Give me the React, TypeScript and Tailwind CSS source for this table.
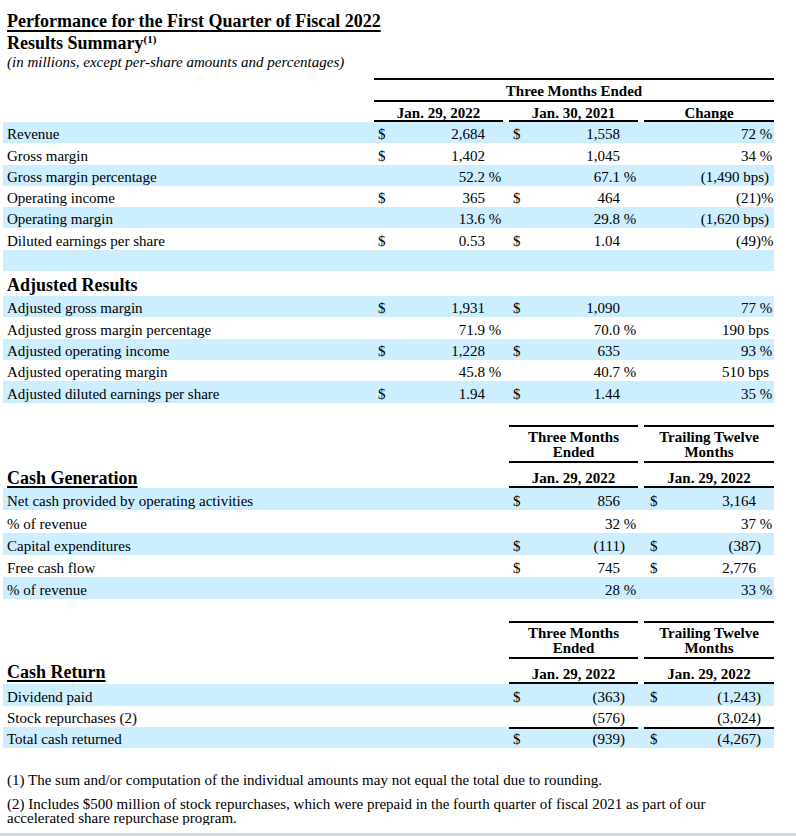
import React from "react";

type C = { d?: boolean; v: string; s?: string; bps?: boolean } | null;

function Val({ c, wide }: { c: C; wide?: boolean }) {
  if (!c) return null;
  if (c.bps)
    return <div className="w-full text-right pr-[5px] whitespace-nowrap">{c.v}</div>;
  return (
    <div className={`flex w-full items-end ${wide ? "pl-[6px]" : "pl-[4px]"}`}>
      <span className="w-[10px]">{c.d ? "$" : ""}</span>
      <span className="flex-1 text-right whitespace-nowrap">{c.v}</span>
      <span className="w-[18px] whitespace-nowrap">{c.s ?? ""}</span>
    </div>
  );
}

function Row({
  label,
  c1,
  c2,
  c3,
  striped,
}: {
  label?: string;
  c1?: C;
  c2?: C;
  c3?: C;
  striped?: boolean;
}) {
  return (
    <div className={`flex w-[771px] h-[21.3px] ${striped ? "bg-[#cceeff]" : ""} leading-[16px]`}>
      <div className="w-[371px] h-full flex items-end pl-[4px] pb-[1px] whitespace-nowrap">{label}</div>
      <div className="w-[129px] h-full flex items-end pb-[1px]">
        <Val c={c1 ?? null} />
      </div>
      <div className="w-[6px]" />
      <div className="w-[129px] h-full flex items-end pb-[1px]">
        <Val c={c2 ?? null} />
      </div>
      <div className="w-[6px]" />
      <div className="w-[130px] h-full flex items-end pb-[1px]">
        <Val c={c3 ?? null} />
      </div>
    </div>
  );
}

function CashRow(props: {
  label: string;
  c2: C;
  c3: C;
  striped?: boolean;
  tall?: boolean;
  lineAbove?: boolean;
}) {
  const { label, c2, c3, striped, tall, lineAbove } = props;
  return (
    <div
      className={`flex w-[771px] ${tall ? "h-[22.3px]" : "h-[21.3px]"} ${
        striped ? "bg-[#cceeff]" : ""
      } leading-[16px]`}
    >
      <div className="w-[371px] h-full flex items-end pl-[4px] pb-[1px] whitespace-nowrap">{label}</div>
      <div className="w-[129px]" />
      <div className="w-[6px]" />
      <div
        className={`w-[129px] h-full flex items-end pb-[1px] ${lineAbove ? "border-t-2 border-black" : ""}`}
      >
        <Val c={c2} />
      </div>
      <div className="w-[6px]" />
      <div
        className={`w-[130px] h-full flex items-end pb-[1px] ${lineAbove ? "border-t-2 border-black" : ""}`}
      >
        <Val c={c3} wide />
      </div>
    </div>
  );
}

function HeaderCol({ a, b, w }: { a: string; b: string; w: string }) {
  return (
    <div className={`${w} flex flex-col font-bold`}>
      <div className="h-[38px] border-t-2 border-b-2 border-black flex flex-col items-center justify-end pb-[1px] leading-[15px]">
        <span>{a}</span>
        <span>{b}</span>
      </div>
      <div className="h-[25px] border-b-2 border-black flex items-end justify-center pb-[1px] leading-[14px]">
        Jan. 29, 2022
      </div>
    </div>
  );
}

function CashHeader({ title, ret }: { title: string; ret?: boolean }) {
  return (
    <div className="flex w-[771px]">
      <div className={`w-[371px] pl-[4px] flex items-end ${ret ? "pb-[2px]" : "pb-0"}`}>
        <span className="font-bold text-[18px] leading-[20px] underline decoration-2 underline-offset-2">
          {title}
        </span>
      </div>
      <div className="w-[129px]" />
      <div className="w-[6px]" />
      <HeaderCol a="Three Months" b="Ended" w="w-[129px]" />
      <div className="w-[6px]" />
      <HeaderCol a="Trailing Twelve" b="Months" w="w-[130px]" />
    </div>
  );
}

export default function App() {
  return (
    <div className="w-[796px] h-[836px] overflow-hidden bg-white flex flex-col font-['Liberation_Serif','Times_New_Roman',serif] text-[15px] text-black">
      <div className="h-[833px] overflow-hidden">
        <div className="pl-[7px] pt-[11px]">
          <div className="h-[20px] text-[18px] leading-[20px] font-bold underline decoration-2 underline-offset-[3px] whitespace-nowrap">
            Performance for the First Quarter of Fiscal 2022
          </div>
          <div className="mt-[2px] h-[20px] text-[18px] leading-[20px] font-bold whitespace-nowrap">
            Results Summary
            <span className="relative top-[-6px] text-[11px] leading-[11px]">(1)</span>
          </div>
          <div className="h-[18px] leading-[18px] italic whitespace-nowrap">
            (in millions, except per-share amounts and percentages)
          </div>
        </div>
        <div className="h-[7px]" />
        <div className="ml-[3px]">
          {/* Table 1 header */}
          <div className="flex w-[771px]">
            <div className="w-[371px]" />
            <div className="w-[400px] flex flex-col font-bold">
              <div className="h-[2px] bg-black" />
              <div className="h-[20px] flex items-end justify-center pb-[1px] leading-[16px]">
                Three Months Ended
              </div>
              <div className="h-[2px] bg-black" />
              <div className="flex">
                <div className="w-[129px] h-[20px] border-b-2 border-black flex items-end justify-center leading-[14px]">
                  Jan. 29, 2022
                </div>
                <div className="w-[6px]" />
                <div className="w-[129px] h-[20px] border-b-2 border-black flex items-end justify-center leading-[14px]">
                  Jan. 30, 2021
                </div>
                <div className="w-[6px]" />
                <div className="w-[130px] h-[20px] border-b-2 border-black flex items-end justify-center leading-[14px]">
                  Change
                </div>
              </div>
            </div>
          </div>
          <Row
            striped
            label="Revenue"
            c1={{ d: true, v: "2,684" }}
            c2={{ d: true, v: "1,558" }}
            c3={{ v: "72", s: "\u00a0%" }}
          />
          <Row
            label="Gross margin"
            c1={{ d: true, v: "1,402" }}
            c2={{ v: "1,045" }}
            c3={{ v: "34", s: "\u00a0%" }}
          />
          <Row
            striped
            label="Gross margin percentage"
            c1={{ v: "52.2", s: "\u00a0%" }}
            c2={{ v: "67.1", s: "\u00a0%" }}
            c3={{ v: "(1,490 bps)", bps: true }}
          />
          <Row
            label="Operating income"
            c1={{ d: true, v: "365" }}
            c2={{ d: true, v: "464" }}
            c3={{ v: "(21", s: ")%" }}
          />
          <Row
            striped
            label="Operating margin"
            c1={{ v: "13.6", s: "\u00a0%" }}
            c2={{ v: "29.8", s: "\u00a0%" }}
            c3={{ v: "(1,620 bps)", bps: true }}
          />
          <Row
            label="Diluted earnings per share"
            c1={{ d: true, v: "0.53" }}
            c2={{ d: true, v: "1.04" }}
            c3={{ v: "(49", s: ")%" }}
          />
          <Row striped />
          <div className="h-[25px] flex items-end pl-[4px] pb-[1.5px] text-[18px] leading-[20px] font-bold">
            Adjusted Results
          </div>
          <Row
            striped
            label="Adjusted gross margin"
            c1={{ d: true, v: "1,931" }}
            c2={{ d: true, v: "1,090" }}
            c3={{ v: "77", s: "\u00a0%" }}
          />
          <Row
            label="Adjusted gross margin percentage"
            c1={{ v: "71.9", s: "\u00a0%" }}
            c2={{ v: "70.0", s: "\u00a0%" }}
            c3={{ v: "190 bps", bps: true }}
          />
          <Row
            striped
            label="Adjusted operating income"
            c1={{ d: true, v: "1,228" }}
            c2={{ d: true, v: "635" }}
            c3={{ v: "93", s: "\u00a0%" }}
          />
          <Row
            label="Adjusted operating margin"
            c1={{ v: "45.8", s: "\u00a0%" }}
            c2={{ v: "40.7", s: "\u00a0%" }}
            c3={{ v: "510 bps", bps: true }}
          />
          <Row
            striped
            label="Adjusted diluted earnings per share"
            c1={{ d: true, v: "1.94" }}
            c2={{ d: true, v: "1.44" }}
            c3={{ v: "35", s: "\u00a0%" }}
          />

          <div className="h-[22.4px]" />
          <CashHeader title="Cash Generation" />
          <CashRow
            tall
            striped
            label="Net cash provided by operating activities"
            c2={{ d: true, v: "856" }}
            c3={{ d: true, v: "3,164" }}
          />
          <CashRow tall label="% of revenue" c2={{ v: "32", s: "\u00a0%" }} c3={{ v: "37", s: "\u00a0%" }} />
          <CashRow
            tall
            striped
            label="Capital expenditures"
            c2={{ d: true, v: "(111", s: ")" }}
            c3={{ d: true, v: "(387", s: ")" }}
          />
          <CashRow tall label="Free cash flow" c2={{ d: true, v: "745" }} c3={{ d: true, v: "2,776" }} />
          <CashRow
            tall
            striped
            label="% of revenue"
            c2={{ v: "28", s: "\u00a0%" }}
            c3={{ v: "33", s: "\u00a0%" }}
          />

          <div className="h-[22px]" />
          <CashHeader title="Cash Return" ret />
          <CashRow
            striped
            label="Dividend paid"
            c2={{ d: true, v: "(363", s: ")" }}
            c3={{ d: true, v: "(1,243", s: ")" }}
          />
          <CashRow label="Stock repurchases (2)" c2={{ v: "(576", s: ")" }} c3={{ v: "(3,024", s: ")" }} />
          <CashRow
            striped
            lineAbove
            label="Total cash returned"
            c2={{ d: true, v: "(939", s: ")" }}
            c3={{ d: true, v: "(4,267", s: ")" }}
          />
        </div>
        <div className="h-[76.6px] overflow-hidden pl-[7px] pt-[24px]">
          <div className="leading-[17px] whitespace-nowrap">
            (1) The sum and/or computation of the individual amounts may not equal the total due to rounding.
          </div>
          <div className="mt-[7.5px] leading-[14px] whitespace-nowrap">
            (2) Includes $500 million of stock repurchases, which were prepaid in the fourth quarter of fiscal 2021 as part of our
            <br />
            accelerated share repurchase program.
          </div>
        </div>
      </div>
      <div className="h-[3px] bg-[#d5d8db]" />
    </div>
  );
}
